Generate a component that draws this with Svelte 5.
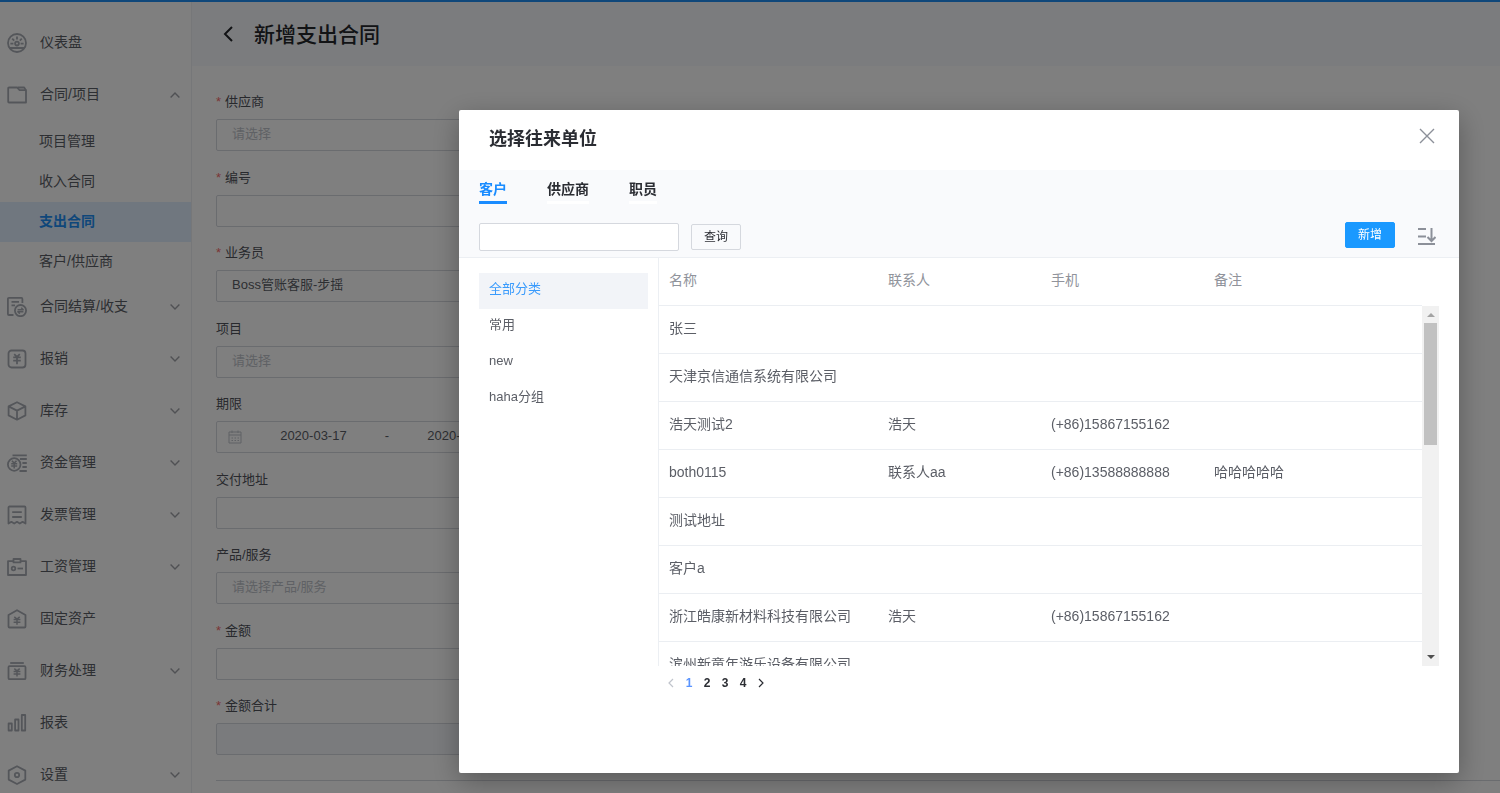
<script lang="ts">
  type MenuItem = { icon: string; text: string; arrow?: "up" | "down"; children?: string[] };
  type Field = { id: string; label: string; kind: string; required?: boolean; value?: string; hint?: string };
  type Company = { name: string; contact?: string; phone?: string; remark?: string };

  const menu: MenuItem[] = [
    { icon: "dashboard", text: "仪表盘" },
    {
      icon: "folder",
      text: "合同/项目",
      arrow: "up",
      children: ["项目管理", "收入合同", "支出合同", "客户/供应商"],
    },
    { icon: "settle", text: "合同结算/收支", arrow: "down" },
    { icon: "expense", text: "报销", arrow: "down" },
    { icon: "stock", text: "库存", arrow: "down" },
    { icon: "fund", text: "资金管理", arrow: "down" },
    { icon: "invoice", text: "发票管理", arrow: "down" },
    { icon: "salary", text: "工资管理", arrow: "down" },
    { icon: "asset", text: "固定资产" },
    { icon: "finance", text: "财务处理", arrow: "down" },
    { icon: "report", text: "报表" },
    { icon: "setting", text: "设置", arrow: "down" },
  ];

  const fields: Field[] = [
    { id: "supplier", label: "供应商", kind: "select", required: true, hint: "请选择" },
    { id: "code", label: "编号", kind: "text", required: true },
    { id: "salesman", label: "业务员", kind: "select", required: true, value: "Boss管账客服-步摇" },
    { id: "project", label: "项目", kind: "select", hint: "请选择" },
    { id: "period", label: "期限", kind: "range" },
    { id: "address", label: "交付地址", kind: "text" },
    { id: "product", label: "产品/服务", kind: "text", hint: "请选择产品/服务" },
    { id: "amount", label: "金额", kind: "text", required: true },
    { id: "total", label: "金额合计", kind: "disabled", required: true },
  ];

  const tabs = ["客户", "供应商", "职员"];
  const groups = ["全部分类", "常用", "new", "haha分组"];
  const pages = [1, 2, 3, 4];

  const companies: Company[] = [
    { name: "张三" },
    { name: "天津京信通信系统有限公司" },
    { name: "浩天测试2", contact: "浩天", phone: "(+86)15867155162" },
    { name: "both0115", contact: "联系人aa", phone: "(+86)13588888888", remark: "哈哈哈哈哈" },
    { name: "测试地址" },
    { name: "客户a" },
    { name: "浙江皓康新材料科技有限公司", contact: "浩天", phone: "(+86)15867155162" },
    { name: "滨州新童年游乐设备有限公司" },
  ];

  let activeMenu = $state("支出合同");
  let activeTab = $state("客户");
  let activeGroup = $state("全部分类");
  let activePage = $state(1);
  let keyword = $state("");
  let visible = $state(true);
</script>

{#snippet menuIcon(name: string)}
  <svg class="icon" viewBox="0 0 20 20" aria-hidden="true">
    {#if name === "dashboard"}
      <circle cx="10" cy="10" r="9" />
      <circle cx="10" cy="10.6" r="1.9" />
      <path d="M10 3.6v3M5.2 5.6l2 2M14.8 5.6l-2 2M3.4 10.6h3M13.6 10.6h3M2.4 15h15.200" />
    {:else if name === "folder"}
      <path d="M2 2.500h8l2.600 2.700h6.400V17.500H2a.8.8 0 0 1-.8-.8V3.300a.8.8 0 0 1 .8-.8z" />
      <path d="M10.500 2.500h6.700l1.600 2.600" />
    {:else if name === "settle"}
      <path d="M6.500 18H1.900a1 1 0 0 1-1-1V1.900a1 1 0 0 1 1-1h12.500a1 1 0 0 1 1 1V6M4.500 4.800h7.500M4.500 8.300h3.500" />
      <circle cx="13.500" cy="13.600" r="5.600" />
      <path stroke-width="1.400" d="M10.600 12.700h5.600l-2-2M16.400 14.700h-5.600l2 2" />
    {:else if name === "expense"}
      <rect x="1.500" y="1.500" width="17" height="17" rx="3" />
      <path d="M7.200 5.200 10 7.800l2.800-2.600M6.200 8.400h7.600M6.200 11.600h7.600M10 7.800v7.400" />
    {:else if name === "stock"}
      <path d="M10 1.200 18.400 5.400v9L10 18.700 1.600 14.400v-9zM1.600 5.400 10 9.600l8.400-4.200M10 9.600v9" />
    {:else if name === "fund"}
      <circle cx="7.200" cy="11.500" r="6.300" />
      <path stroke-width="1.500" d="M4.900 7.800l2.300 2.300 2.300-2.300M4.200 10.700h6M4.200 13h6M7.200 10.200v5.300" />
      <path d="M5.500 2.400h14.300M13 6h6.800M15.400 10h4.400M15.400 14h4.400M12.500 18h7.300" />
    {:else if name === "invoice"}
      <path d="M1.500 18.600V2.500a1 1 0 0 1 1-1h15a1 1 0 0 1 1 1v16.100l-2.900-1.800-2.800 1.800-2.800-1.800-2.800 1.800-2.800-1.800zM5.200 7.200h9.600M5.200 12h9.600" />
    {:else if name === "salary"}
      <path d="M6 4.200H1V18h18V4.200h-5" />
      <rect x="6.500" y="2" width="7" height="3.400" />
      <circle cx="6.500" cy="11.500" r="1.800" />
      <path d="M10.500 11.500h5.500" />
    {:else if name === "asset"}
      <path d="M10 1.200 18.500 6v11.500a1 1 0 0 1-1 1h-15a1 1 0 0 1-1-1V6z" />
      <path stroke-width="1.500" d="M7.300 7.800 10 10l2.700-2.200M6.600 10.600h6.800M6.600 13.200h6.800M10 10v5.800" />
    {:else if name === "finance"}
      <path d="M3.200 2h13.600" />
      <rect x="1.500" y="5.200" width="17" height="13" rx="1" />
      <path stroke-width="1.500" d="M7.300 7.600 10 9.800l2.700-2.200M6.600 10.400h6.800M6.600 13h6.800M10 9.800v5.600" />
    {:else if name === "report"}
      <rect x="1.600" y="10.500" width="3.200" height="7" />
      <rect x="8.100" y="6.500" width="3.400" height="11" />
      <rect x="14.800" y="2" width="3.400" height="15.500" />
    {:else}
      <path d="M10 1.200 18.300 5.600v9L10 19 1.700 14.600v-9z" />
      <circle cx="10" cy="10" r="2.200" />
    {/if}
  </svg>
{/snippet}

<div class="page">
  <div class="top-line"></div>
  <div class="layout">
    <nav class="sidebar">
      {#each menu as item}
        <button class="menu-item">
          {@render menuIcon(item.icon)}
          <span>{item.text}</span>
          {#if item.arrow}
            <svg class="arrow" class:up={item.arrow === "up"} viewBox="0 0 10 6" aria-hidden="true">
              <path d="M.6.6 5 5 9.400.6" />
            </svg>
          {/if}
        </button>
        {#if item.children}
          <div class="submenu">
            {#each item.children as child}
              <button class:active={child === activeMenu} onclick={() => (activeMenu = child)}>
                {child}
              </button>
            {/each}
          </div>
        {/if}
      {/each}
    </nav>

    <main>
      <header class="page-head">
        <button class="back" aria-label="返回">
          <svg viewBox="0 0 10 16" aria-hidden="true"><path d="M9 1 2 8l7 7" /></svg>
        </button>
        <h1>新增支出合同</h1>
      </header>

      <form>
        {#each fields as field}
          <div class="field">
            <label for={field.id} class:required={field.required}>{field.label}</label>
            {#if field.kind === "select"}
              <select id={field.id} class="control" class:hint={!field.value}>
                <option>{field.value ?? field.hint}</option>
              </select>
            {:else if field.kind === "range"}
              <div class="control range">
                <svg class="calendar" viewBox="0 0 14 14" aria-hidden="true">
                  <path d="M1 2h12v11H1zM1 5h12M4 .5v2.500M10 .5v2.500M3.500 8h1.500M6.500 8H8M9.500 8H11M3.500 10.500h1.500M6.500 10.500H8M9.500 10.500H11" />
                </svg>
                <input id={field.id} value="2020-03-17" />
                <span>-</span>
                <input aria-label="结束日期" value="2020-03-17" />
              </div>
            {:else}
              <input
                id={field.id}
                class="control"
                placeholder={field.hint}
                disabled={field.kind === "disabled"}
              />
            {/if}
          </div>
        {/each}
        <hr />
      </form>
    </main>
  </div>
</div>

{#if visible}
  <div class="mask">
    <div class="dialog" role="dialog" aria-labelledby="dialog-title">
      <header class="dialog-head">
        <h2 id="dialog-title">选择往来单位</h2>
        <button class="close" aria-label="关闭" onclick={() => (visible = false)}>
          <svg viewBox="0 0 16 16" aria-hidden="true"><path d="M1 1l14 14M15 1 1 15" /></svg>
        </button>
      </header>

      <div class="filter">
        <div class="tabs" role="tablist">
          {#each tabs as tab}
            <button
              role="tab"
              aria-selected={tab === activeTab}
              class:active={tab === activeTab}
              onclick={() => (activeTab = tab)}
            >
              {tab}
            </button>
          {/each}
        </div>
        <div class="tools">
          <input class="search" aria-label="关键字" bind:value={keyword} />
          <button class="btn">查询</button>
          <button class="btn primary">新增</button>
          <button class="sort" aria-label="排序">
            <svg viewBox="0 0 18 18" aria-hidden="true">
              <path d="M0 2h8M0 9.500h8M0 17h17M13.500 1v12M9.500 10l4 4 4-4" />
            </svg>
          </button>
        </div>
      </div>

      <div class="content">
        <div class="groups">
          {#each groups as group}
            <button class:active={group === activeGroup} onclick={() => (activeGroup = group)}>
              {group}
            </button>
          {/each}
        </div>

        <div class="list">
          <div class="scroll">
            <table>
              <thead>
                <tr>
                  <th class="name">名称</th>
                  <th class="mid">联系人</th>
                  <th class="mid">手机</th>
                  <th>备注</th>
                </tr>
              </thead>
              <tbody>
                {#each companies as company}
                  <tr>
                    <td>{company.name}</td>
                    <td>{company.contact ?? ""}</td>
                    <td>{company.phone ?? ""}</td>
                    <td>{company.remark ?? ""}</td>
                  </tr>
                {/each}
              </tbody>
            </table>
          </div>
          <div class="scrollbar" aria-hidden="true">
            <svg viewBox="0 0 8 4"><path d="M0 4l4-4 4 4z" /></svg>
            <div class="thumb"></div>
            <svg class="down" viewBox="0 0 8 4"><path d="M0 0l4 4 4-4z" /></svg>
          </div>
        </div>
      </div>

      <div class="pager">
        <button class="step" disabled aria-label="上一页">
          <svg viewBox="0 0 6 10" aria-hidden="true"><path d="M5 1 1 5l4 4" /></svg>
        </button>
        {#each pages as page}
          <button class:active={page === activePage} onclick={() => (activePage = page)}>{page}</button>
        {/each}
        <button class="step" aria-label="下一页">
          <svg viewBox="0 0 6 10" aria-hidden="true"><path d="M1 1l4 4-4 4" /></svg>
        </button>
      </div>
    </div>
  </div>
{/if}

<style>
  :global(body) {
    overflow: hidden;
  }
  .page,
  .mask {
    font-family: "Liberation Sans", "Noto Sans CJK SC", sans-serif;
    font-size: 14px;
    color: #5b5e66;
  }
  .page *,
  .mask,
  .mask * {
    box-sizing: border-box;
  }
  button,
  input,
  select {
    margin: 0;
    padding: 0;
    border: 0;
    outline: none;
    background: none;
    font: inherit;
    color: inherit;
  }
  svg {
    display: block;
    fill: none;
    stroke: currentColor;
  }

  .page {
    height: 100vh;
    display: flex;
    flex-direction: column;
    overflow: hidden;
    background: #fff;
  }
  .top-line {
    flex: none;
    height: 2px;
    background: #1f8ef5;
  }
  .layout {
    flex: 1;
    min-height: 0;
    display: flex;
  }

  .sidebar {
    flex: none;
    width: 192px;
    padding-top: 14px;
    border-right: 1px solid #eceef2;
    overflow: hidden;
  }
  .menu-item {
    display: flex;
    align-items: center;
    width: 100%;
    height: 52px;
    padding: 0 11px 0 7px;
    text-align: left;
  }
  .menu-item span {
    flex: 1;
    padding-left: 13px;
    line-height: 20px;
  }
  .icon {
    width: 20px;
    height: 20px;
    margin-top: 2px;
    color: #a9adb5;
    stroke-width: 1.8;
    stroke-linejoin: round;
  }
  .arrow {
    width: 10px;
    height: 6px;
    margin-top: 2px;
    color: #a0a3a9;
    stroke-width: 1.4;
  }
  .arrow.up {
    transform: rotate(180deg);
  }
  .submenu {
    height: 160px;
    padding-top: 2px;
  }
  .submenu button {
    display: block;
    width: 100%;
    height: 40px;
    padding: 0 0 4px 39px;
    text-align: left;
  }
  .submenu .active {
    background: #e0effe;
    color: #1f8ef5;
    font-weight: bold;
  }

  main {
    flex: 1;
    min-width: 0;
  }
  .page-head {
    display: flex;
    align-items: center;
    height: 64px;
    padding-left: 31px;
    background: #f7f9fc;
    color: #24262b;
  }
  .back svg {
    width: 10px;
    height: 16px;
    stroke-width: 2;
  }
  h1 {
    margin: 0;
    padding: 1px 0 0 21px;
    font-size: 21px;
    font-weight: 500;
    line-height: 28px;
  }

  form {
    padding: 26px 0 0 24px;
    font-size: 13px;
  }
  .field {
    max-width: 328px;
    margin-bottom: 16px;
  }
  .field:nth-child(odd) {
    margin-bottom: 17px;
  }
  label {
    display: block;
    margin-bottom: 7px;
    line-height: 20px;
    color: #50535b;
  }
  label.required::before {
    content: "*";
    margin-right: 4px;
    color: #f56c6c;
  }
  .control {
    display: block;
    width: 100%;
    height: 32px;
    padding: 0 15px 4px;
    border: 1px solid #d5d8de;
    border-radius: 2px;
    appearance: none;
  }
  .control.hint,
  .control::placeholder {
    color: #bfc3ca;
    opacity: 1;
  }
  .control:disabled {
    background: #f4f6fb;
  }
  .range {
    display: flex;
    align-items: center;
    padding: 0 11px;
  }
  .calendar {
    flex: none;
    width: 14px;
    height: 14px;
    color: #bfc3ca;
  }
  .range input,
  .range span {
    padding-bottom: 4px;
  }
  .range input {
    flex: 1;
    min-width: 0;
    text-align: center;
  }
  hr {
    margin: 25px 0 0;
    border: 0;
    border-top: 1px solid #d5d8de;
  }

  .mask {
    position: fixed;
    inset: 0;
    display: flex;
    justify-content: flex-end;
    align-items: flex-start;
    padding: 110px 41px 20px;
    background: rgba(0, 0, 0, 0.5);
  }
  .dialog {
    flex: 1;
    max-width: 1000px;
    padding-bottom: 80px;
    border-radius: 2px;
    background: #fff;
    box-shadow: 0 8px 28px rgba(0, 0, 0, 0.3);
  }
  .dialog-head {
    display: flex;
    justify-content: space-between;
    align-items: center;
    height: 60px;
    padding: 0 24px 2px 30px;
    color: #2b2d33;
  }
  h2 {
    margin: 0;
    font-size: 18px;
    line-height: 24px;
  }
  .close {
    padding-bottom: 6px;
  }
  .close svg {
    width: 16px;
    height: 16px;
    color: #8c9099;
    stroke-width: 1.4;
  }

  .filter {
    height: 88px;
    padding: 8px 20px 0;
    border-bottom: 1px solid #eceff3;
    background: #f9fafc;
  }
  .tabs {
    display: flex;
    gap: 40px;
  }
  .tabs button {
    height: 26px;
    padding-bottom: 2px;
    border-bottom: 3px solid #fff;
    line-height: 20px;
    font-weight: bold;
    color: #2b2d33;
  }
  .tabs button.active {
    border-color: #1a8cff;
    color: #1a8cff;
  }
  .tools {
    display: flex;
    align-items: center;
    margin-top: 18px;
  }
  .search {
    width: 200px;
    height: 28px;
    margin-right: 12px;
    padding: 0 10px;
    border: 1px solid #d5d8de;
    border-radius: 2px;
    background: #fff;
    font-size: 13px;
  }
  .btn {
    width: 50px;
    height: 26px;
    padding-bottom: 4px;
    border: 1px solid #d5d8de;
    border-radius: 2px;
    font-size: 12px;
    color: #2b2d33;
  }
  .btn.primary {
    margin: 0 0 4px auto;
    border-color: #1a99ff;
    background: #1a99ff;
    color: #fff;
  }
  .sort {
    margin: 0 3px 2px 23px;
  }
  .sort svg {
    width: 18px;
    height: 18px;
    color: #8c9099;
    stroke-width: 2;
  }

  .content {
    display: flex;
  }
  .groups {
    flex: none;
    width: 200px;
    padding: 15px 10px 0 20px;
    border-right: 1px solid #eceff3;
  }
  .groups button {
    display: block;
    width: 100%;
    height: 36px;
    padding: 0 10px 4px;
    font-size: 13px;
    line-height: 18px;
    text-align: left;
  }
  .groups button.active {
    background: #f2f4f8;
    color: #3a9bfc;
  }
  .list {
    flex: 1;
    min-width: 0;
    display: flex;
    padding-right: 20px;
  }
  .scroll {
    flex: 1;
    height: 408px;
    overflow-y: auto;
    scrollbar-width: none;
  }
  table {
    width: 100%;
    table-layout: fixed;
    border-spacing: 0;
  }
  th,
  td {
    height: 48px;
    padding: 0 10px 4px;
    border-bottom: 1px solid #ebeef2;
    line-height: 20px;
    text-align: left;
    white-space: nowrap;
  }
  th {
    position: sticky;
    top: 0;
    background: #fff;
    font-weight: normal;
    color: #90939b;
  }
  .name {
    width: 219px;
  }
  .mid {
    width: 163px;
  }
  .scrollbar {
    display: flex;
    flex-direction: column;
    align-items: center;
    width: 17px;
    margin-top: 48px;
    padding: 7px 0;
    background: #f1f1f1;
  }
  .scrollbar svg {
    width: 8px;
    height: 4px;
    fill: #a3a3a3;
    stroke: none;
  }
  .scrollbar .down {
    margin-top: auto;
    fill: #505050;
  }
  .thumb {
    width: 13px;
    height: 122px;
    margin-top: 6px;
    background: #c1c1c1;
  }

  .pager {
    display: flex;
    margin-left: 203px;
    padding-top: 7px;
    font-size: 12px;
    font-weight: bold;
    color: #2b2d33;
  }
  .pager button {
    display: flex;
    justify-content: center;
    align-items: center;
    width: 18px;
    height: 20px;
  }
  .pager .active {
    color: #5a94ff;
  }
  .pager .step:disabled {
    color: #c0c4cc;
  }
  .pager svg {
    width: 6px;
    height: 10px;
    stroke-width: 1.2;
  }
</style>
